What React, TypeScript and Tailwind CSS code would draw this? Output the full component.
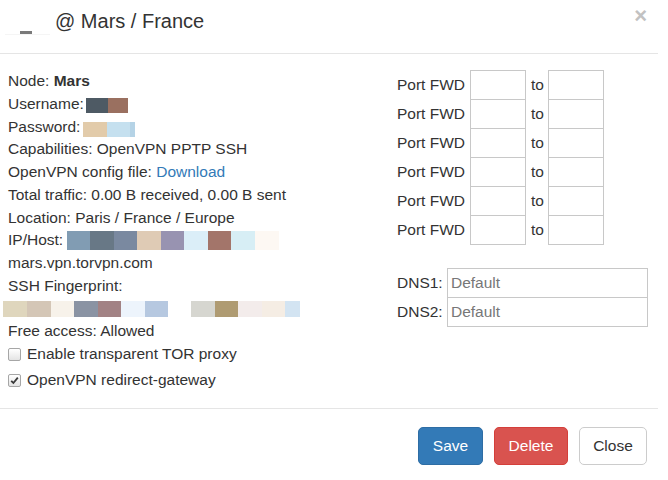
import React from "react";

type Patch = [string, number];

const Blur: React.FC<{ patches: Patch[]; h: number; className?: string }> = ({ patches, h, className }) => (
    <span className={"inline-flex " + (className || "")}>
        {patches.map(([c, w], i) => (
            <span key={i} className="inline-block" style={{ background: c, width: w, height: h }} />
        ))}
    </span>
);

const userPatches: Patch[] = [["#4e5a64", 22], ["#9a7060", 20]];
const passPatches: Patch[] = [["#e2cbaa", 24], ["#c5e0ef", 23], ["#b5d3e6", 5]];
const ipPatches: Patch[] = [
    ["#819cb3", 23], ["#687886", 24], ["#7a89a0", 23], ["#dfcbb5", 24], ["#9893b1", 23],
    ["#dbeef8", 24], ["#a3756a", 23], ["#d7eef5", 24], ["#fdf8f3", 24],
];
const sshPatches: Patch[] = [
    ["#dfd6bd", 24], ["#d4c6b6", 24], ["#f7f2ea", 23], ["#8a93a3", 24], ["#a28284", 23],
    ["#edf4fc", 24], ["#b6c8e0", 23], ["#ffffff", 23], ["#d6d6d0", 24], ["#af9b72", 23],
    ["#f3eceb", 24], ["#f5ede4", 23], ["#d3e4f2", 15],
];

const Check: React.FC<{ checked?: boolean }> = ({ checked }) => (
    <span className="w-[13px] h-[13px] border border-[#a6a6a6] rounded-[2px] bg-gradient-to-b from-white to-[#e4e4e4] flex items-center justify-center">
        {checked && (
            <svg width="9" height="9" viewBox="0 0 9 9">
                <path d="M1.2 4.8 L3.4 7 L7.8 1.6" fill="none" stroke="#3a3a3a" strokeWidth="1.8" />
            </svg>
        )}
    </span>
);

const App: React.FC = () => {
    const ports = [0, 1, 2, 3, 4, 5];

    return (
        <div className="w-[668px] h-[480px] bg-white overflow-hidden text-[#333] font-['Liberation_Sans',Arial,sans-serif]">
            <div className="w-[658px]">
                {/* header */}
                <div className="h-[54px] border-b border-[#e5e5e5] flex items-start">
                    <div className="w-[55px] h-full relative">
                        <div className="absolute left-[5px] top-[34px] w-[45px] h-px bg-[#f5f5f5]" />
                        <div className="absolute left-[20px] top-[31px] w-[12px] h-[3px] bg-[#7a7a7a]" />
                    </div>
                    <h4 className="text-[20px] leading-[22px] pt-[10px]">@ Mars / France</h4>
                    <button className="ml-auto mr-[11px] mt-[5px] text-[22px] leading-[22px] font-bold text-[#c2c2c2]">×</button>
                </div>

                {/* body */}
                <div className="flex pt-[16px] h-[354px]">
                    <div className="w-[397px] shrink-0 pl-[8px] text-[15.5px] leading-[22.75px]">
                        <div>Node: <b>Mars</b></div>
                        <div>Username:<Blur patches={userPatches} h={15} className="ml-[2px] align-[-4px]" /></div>
                        <div>Password:<Blur patches={passPatches} h={15} className="ml-[3px] align-[-5px]" /></div>
                        <div>Capabilities: OpenVPN PPTP SSH</div>
                        <div>OpenVPN config file: <a className="text-[#337ab7]">Download</a></div>
                        <div>Total traffic: 0.00 B received, 0.00 B sent</div>
                        <div>Location: Paris / France / Europe</div>
                        <div>IP/Host: <Blur patches={ipPatches} h={19} className="align-[-5px]" /></div>
                        <div>mars.vpn.torvpn.com</div>
                        <div>SSH Fingerprint:</div>
                        <div className="h-[22.75px] flex items-center -ml-[5px]">
                            <Blur patches={sshPatches} h={16} />
                        </div>
                        <div>Free access: Allowed</div>
                        <label className="flex items-center gap-[6px] -mt-px h-[24px]">
                            <Check />
                            <span>Enable transparent TOR proxy</span>
                        </label>
                        <label className="flex items-center gap-[6px] mt-[2px] h-[24px]">
                            <Check checked />
                            <span>OpenVPN redirect-gateway</span>
                        </label>
                    </div>

                    <div className="flex flex-col text-[15.5px] whitespace-nowrap">
                        {ports.map((p) => (
                            <div key={p} className={"flex items-center h-[30px] " + (p > 0 ? "-mt-px" : "")}>
                                <span className="w-[68px] shrink-0">Port FWD</span>
                                <input className="ml-[5px] w-[56px] h-[30px] border border-[#c8c8c8] outline-none" />
                                <span className="ml-[5px] w-[13px] shrink-0">to</span>
                                <input className="ml-[4px] w-[56px] h-[30px] border border-[#c8c8c8] outline-none" />
                            </div>
                        ))}
                        <div className="mt-[23px]">
                            {["DNS1:", "DNS2:"].map((l, i) => (
                                <div key={l} className={"flex items-center h-[30px] " + (i > 0 ? "-mt-px" : "")}>
                                    <span className="w-[46px] shrink-0">{l}</span>
                                    <input
                                        placeholder="Default"
                                        className="ml-[4px] w-[201px] h-[30px] border border-[#c8c8c8] px-[3px] text-[15.5px] placeholder:text-[#777] outline-none"
                                    />
                                </div>
                            ))}
                        </div>
                    </div>
                </div>

                {/* footer */}
                <div className="border-t border-[#e5e5e5] flex justify-end gap-[11px] pt-[18px] pr-[11px] text-[15.5px]">
                    <button className="w-[65px] h-[38px] rounded-[5px] bg-[#337ab7] border border-[#2e6da4] text-white">Save</button>
                    <button className="w-[74px] h-[38px] rounded-[5px] bg-[#d9534f] border border-[#d43f3a] text-white">Delete</button>
                    <button className="w-[68px] h-[38px] rounded-[5px] bg-white border border-[#ccc] text-[#333]">Close</button>
                </div>
            </div>
        </div>
    );
};

export default App;
